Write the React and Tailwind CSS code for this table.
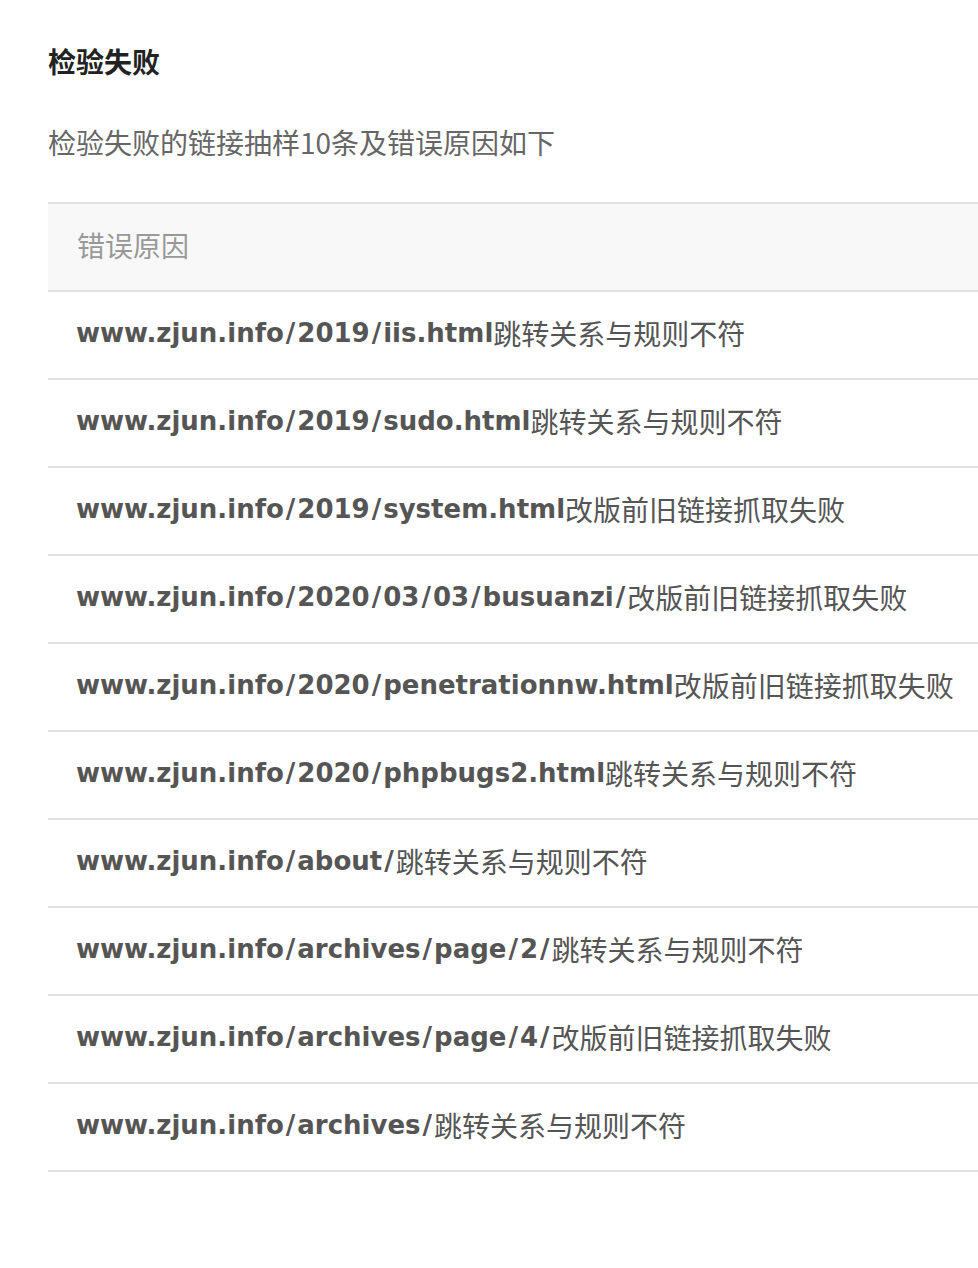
import React from "react";

const rows = [
  { url: "www.zjun.info/2019/iis.html", reason: "跳转关系与规则不符" },
  { url: "www.zjun.info/2019/sudo.html", reason: "跳转关系与规则不符" },
  { url: "www.zjun.info/2019/system.html", reason: "改版前旧链接抓取失败" },
  { url: "www.zjun.info/2020/03/03/busuanzi/", reason: "改版前旧链接抓取失败" },
  { url: "www.zjun.info/2020/penetrationnw.html", reason: "改版前旧链接抓取失败" },
  { url: "www.zjun.info/2020/phpbugs2.html", reason: "跳转关系与规则不符" },
  { url: "www.zjun.info/about/", reason: "跳转关系与规则不符" },
  { url: "www.zjun.info/archives/page/2/", reason: "跳转关系与规则不符" },
  { url: "www.zjun.info/archives/page/4/", reason: "改版前旧链接抓取失败" },
  { url: "www.zjun.info/archives/", reason: "跳转关系与规则不符" },
];

const cjk = { fontFamily: '"Noto Sans CJK SC", "Noto Sans", sans-serif' };

// slashes in the reference font sit wider than DejaVu's
const Url = ({ text }) => {
  const parts = text.split("/");
  return (
    <span
      className="font-bold text-[26px]"
      style={{ fontFamily: '"DejaVu Sans", "Noto Sans CJK SC", sans-serif' }}
    >
      {parts.map((p, i) => (
        <React.Fragment key={i}>
          {i > 0 && <span className="px-[2px]">/</span>}
          {p}
        </React.Fragment>
      ))}
    </span>
  );
};

export default function App() {
  return (
    <div className="min-h-screen bg-white overflow-hidden pl-12 pt-[43px]" style={cjk}>
      {/* Title */}
      <h2 className="text-[28px] leading-[36px] font-bold text-[#222]">检验失败</h2>
      <p className="mt-[45px] text-[28px] leading-[36px] text-[#666]">
        检验失败的链接抽样10条及错误原因如下
      </p>

      {/* Table */}
      <div className="mt-[42px] w-[1000px] border-t-2 border-[#e0e0e0]">
        <div className="h-[88px] flex items-center pb-1 px-[29px] bg-[#f8f8f8] border-b-2 border-[#e0e0e0] text-[28px] text-[#999]">
          错误原因
        </div>
        {rows.map((r) => (
          <div
            key={r.url}
            className="h-[88px] flex items-center pb-1 px-[28px] border-b-2 border-[#e0e0e0] text-[28px] text-[#555] whitespace-nowrap"
          >
            <Url text={r.url} />
            <span>{r.reason}</span>
          </div>
        ))}
      </div>
    </div>
  );
}
